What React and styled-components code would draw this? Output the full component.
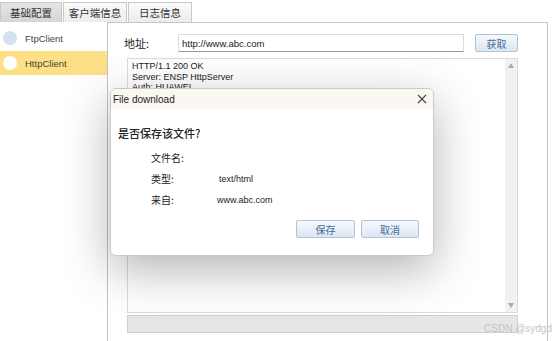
import React from "react";
import styled, { createGlobalStyle } from "styled-components";

const GlobalStyle = createGlobalStyle`
  html, body {
    margin: 0;
    padding: 0;
    background: #ffffff;
  }
  body {
    width: 554px;
    height: 341px;
    overflow: hidden;
    font-family: "Noto Sans CJK SC", "Liberation Sans", sans-serif;
    color: #222;
  }
`;

const Page = styled.div`
  position: relative;
  width: 554px;
  height: 341px;
  display: flex;
  flex-direction: column;
`;

const TabBar = styled.div`
  display: flex;
  height: 22px;
  padding-top: 2px;
  box-sizing: border-box;
  gap: 1px;
`;

const Tab = styled.div`
  width: ${({ $w }) => $w}px;
  display: flex;
  align-items: center;
  justify-content: center;
  font-size: 10.5px;
  color: #333;
  border: 1px solid #c8c8c8;
  border-bottom: none;
  box-sizing: border-box;
  background: ${({ $active }) =>
    $active ? "linear-gradient(#e4e4e4, #d6d6d6)" : "linear-gradient(#fafafa, #ececec)"};
`;

const Body = styled.div`
  flex: 1;
  display: flex;
  min-height: 0;
`;

const Sidebar = styled.div`
  width: 107px;
  padding-top: 4px;
  display: flex;
  flex-direction: column;
  gap: 1px;
`;

const ClientItem = styled.div`
  height: 24px;
  display: flex;
  align-items: center;
  gap: 8px;
  padding-left: 3px;
  font-family: "Liberation Sans", sans-serif;
  font-size: 9.5px;
  color: #444;
  background: ${({ $selected }) => ($selected ? "#fddf86" : "transparent")};
`;

const Dot = styled.span`
  width: 14px;
  height: 14px;
  border-radius: 50%;
  background: ${({ $selected }) => ($selected ? "#ffffff" : "#d5e1ee")};
`;

const Main = styled.div`
  flex: 1;
  margin-right: 6px;
  border: 1px solid #c4c4c4;
  border-bottom: none;
  display: flex;
  flex-direction: column;
  padding: 11px 29px 0 16px;
  box-sizing: border-box;
`;

const AddressRow = styled.div`
  display: flex;
  align-items: center;
  height: 18px;
`;

const AddressLabel = styled.span`
  width: 54px;
  font-size: 11px;
  color: #222;
`;

const AddressInput = styled.div`
  flex: 1;
  height: 18px;
  box-sizing: border-box;
  border: 1px solid #dcdcdc;
  border-bottom: 1px solid #9a9a9a;
  padding-left: 3px;
  font-family: "Liberation Sans", sans-serif;
  font-size: 9.5px;
  display: flex;
  align-items: center;
  margin-right: 11px;
`;

const Button = styled.div`
  width: ${({ $w }) => $w}px;
  height: 18px;
  box-sizing: border-box;
  border: 1px solid #b3c3d6;
  border-radius: 2px;
  background: linear-gradient(#f6f9fc, #dbe7f3);
  color: #4a6a96;
  font-size: 10px;
  display: flex;
  align-items: center;
  justify-content: center;
`;

const OutputBox = styled.div`
  margin: 6px 0 0 3px;
  height: 255px;
  border: 1px solid #dadada;
  display: flex;
  box-sizing: border-box;
`;

const OutputText = styled.div`
  flex: 1;
  padding: 2px 4px;
  font-family: "Liberation Sans", sans-serif;
  font-size: 9px;
  line-height: 10.5px;
  color: #222;
  white-space: pre;
`;

const ScrollBar = styled.div`
  width: 12px;
  background: #f1f1f1;
  display: flex;
  flex-direction: column;
  justify-content: space-between;
  align-items: center;
  padding: 4px 0;
  color: #a8a8a8;
  font-size: 6px;
  line-height: 6px;
`;

const StatusBar = styled.div`
  margin: 2px 0 0 3px;
  height: 18px;
  background: #e6e6e6;
  border: 1px solid #cfcfcf;
  box-sizing: border-box;
`;

const Dialog = styled.div`
  position: absolute;
  left: 110px;
  top: 88px;
  width: 324px;
  height: 168px;
  background: #ffffff;
  border: 1px solid #c9c9c9;
  border-radius: 6px;
  box-sizing: border-box;
  box-shadow: 0 14px 48px rgba(0, 0, 0, 0.3);
  overflow: hidden;
  display: flex;
  flex-direction: column;
`;

const DialogTitle = styled.div`
  height: 20px;
  background: #fbf8f1;
  display: flex;
  align-items: center;
  justify-content: space-between;
  padding: 0 6px 0 2px;
  font-family: "Liberation Sans", sans-serif;
  font-size: 10px;
  color: #222;
`;

const DialogBody = styled.div`
  padding: 16px 0 0 7px;
  display: flex;
  flex-direction: column;
`;

const Question = styled.div`
  font-size: 11px;
  font-weight: 500;
  color: #222;
  margin-bottom: 6px;
`;

const InfoRow = styled.div`
  display: flex;
  height: 21px;
  align-items: center;
  padding-left: 33px;
  font-size: 10px;
`;

const InfoLabel = styled.span`
  width: ${({ $w }) => $w}px;
`;

const InfoValue = styled.span`
  font-family: "Liberation Sans", sans-serif;
  font-size: 9px;
`;

const DialogButtons = styled.div`
  display: flex;
  justify-content: flex-end;
  gap: 6px;
  padding: 10px 14px 0 0;
`;

const Watermark = styled.div`
  position: absolute;
  right: 2px;
  bottom: 7px;
  font-family: "Liberation Sans", sans-serif;
  font-size: 10px;
  color: #c4c4c4;
`;

export default function App() {
  return (
    <Page>
      <GlobalStyle />
      <TabBar>
        <Tab $w={62} $active>基础配置</Tab>
        <Tab $w={64}>客户端信息</Tab>
        <Tab $w={64}>日志信息</Tab>
      </TabBar>
      <Body>
        <Sidebar>
          <ClientItem>
            <Dot />
            FtpClient
          </ClientItem>
          <ClientItem $selected>
            <Dot $selected />
            HttpClient
          </ClientItem>
        </Sidebar>
        <Main>
          <AddressRow>
            <AddressLabel>地址:</AddressLabel>
            <AddressInput>http://www.abc.com</AddressInput>
            <Button $w={43}>获取</Button>
          </AddressRow>
          <OutputBox>
            <OutputText>
              {"HTTP/1.1 200 OK\nServer: ENSP HttpServer\nAuth: HUAWEI"}
            </OutputText>
            <ScrollBar>
              <span>▲</span>
              <span>▼</span>
            </ScrollBar>
          </OutputBox>
          <StatusBar />
        </Main>
      </Body>
      <Dialog>
        <DialogTitle>
          <span>File download</span>
          <svg width="10" height="10" viewBox="0 0 10 10">
            <path d="M1 1 L9 9 M9 1 L1 9" stroke="#444" strokeWidth="1.1" />
          </svg>
        </DialogTitle>
        <DialogBody>
          <Question>是否保存该文件?</Question>
          <InfoRow>
            <InfoLabel $w={68}>文件名:</InfoLabel>
          </InfoRow>
          <InfoRow>
            <InfoLabel $w={68}>类型:</InfoLabel>
            <InfoValue>text/html</InfoValue>
          </InfoRow>
          <InfoRow>
            <InfoLabel $w={66}>来自:</InfoLabel>
            <InfoValue>www.abc.com</InfoValue>
          </InfoRow>
          <DialogButtons>
            <Button $w={59}>保存</Button>
            <Button $w={58}>取消</Button>
          </DialogButtons>
        </DialogBody>
      </Dialog>
      <Watermark>CSDN @sydgd</Watermark>
    </Page>
  );
}
